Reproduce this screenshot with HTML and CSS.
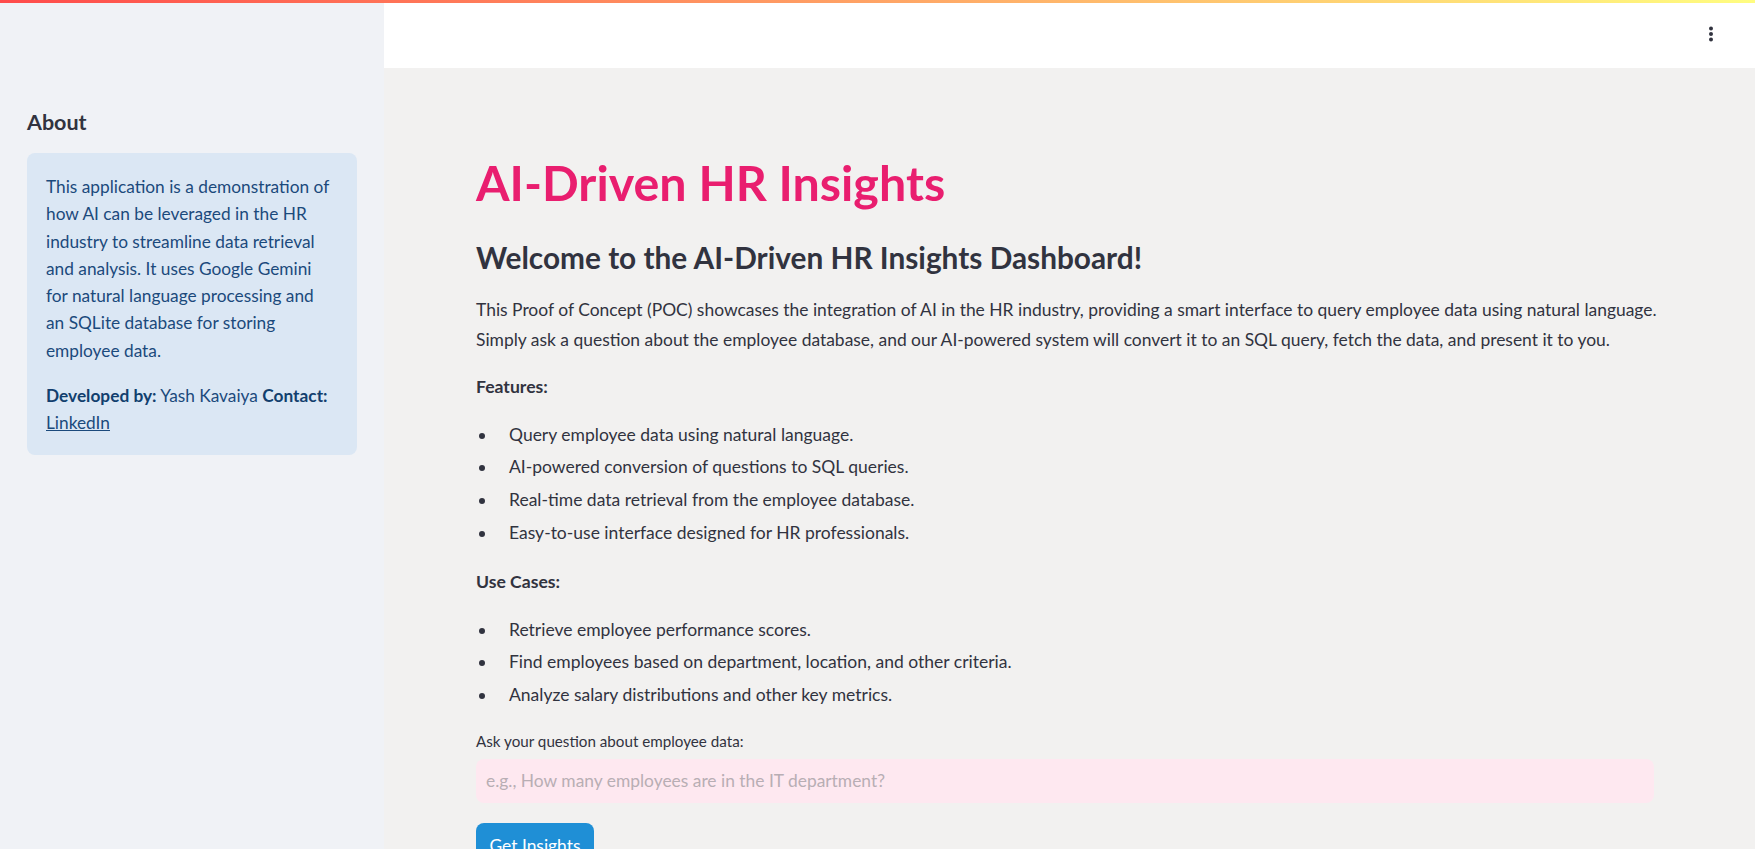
FILE: index.html
```html
<!DOCTYPE html>
<html lang="en">
<head>
<meta charset="utf-8">
<title>AI-Driven HR Insights</title>
<link rel="stylesheet" href="styles.css">
</head>
<body>
<div class="decoration"></div>
<div class="app">
  <aside class="sidebar">
    <h3 class="side-title">About</h3>
    <div class="info">
      <p>This application is a demonstration of<br>how AI can be leveraged in the HR<br>industry to streamline data retrieval<br>and analysis. It uses Google Gemini<br>for natural language processing and<br>an SQLite database for storing<br>employee data.</p>
      <p><strong>Developed by:</strong> Yash Kavaiya <strong>Contact:</strong><br><a href="#" class="link">LinkedIn</a></p>
    </div>
  </aside>
  <main class="main">
    <header class="topbar">
      <button class="menu" type="button" aria-label="Main menu">
        <svg width="16" height="16" viewBox="0 0 16 16"><circle cx="8" cy="2.5" r="2" fill="#31333f"/><circle cx="8" cy="8" r="2" fill="#31333f"/><circle cx="8" cy="13.5" r="2" fill="#31333f"/></svg>
      </button>
    </header>
    <section class="content">
      <h1 class="title">AI-Driven HR Insights</h1>
      <h3 class="subtitle">Welcome to the AI-Driven HR Insights Dashboard!</h3>
      <p class="intro">This Proof of Concept (POC) showcases the integration of AI in the HR industry, providing a smart interface to query employee data using natural language.<br>Simply ask a question about the employee database, and our AI-powered system will convert it to an SQL query, fetch the data, and present it to you.</p>
      <p class="section-label">Features:</p>
      <ul class="bullets">
        <li>Query employee data using natural language.</li>
        <li>AI-powered conversion of questions to SQL queries.</li>
        <li>Real-time data retrieval from the employee database.</li>
        <li>Easy-to-use interface designed for HR professionals.</li>
      </ul>
      <p class="section-label second">Use Cases:</p>
      <ul class="bullets">
        <li>Retrieve employee performance scores.</li>
        <li>Find employees based on department, location, and other criteria.</li>
        <li>Analyze salary distributions and other key metrics.</li>
      </ul>
      <label class="field-label" for="q">Ask your question about employee data:</label>
      <input class="field" id="q" type="text" placeholder="e.g., How many employees are in the IT department?">
      <div class="actions"><button class="primary" type="button">Get Insights</button></div>
    </section>
  </main>
</div>
</body>
</html>
```
FILE: styles.css
```css
* { box-sizing: border-box; }
html, body { margin: 0; padding: 0; height: 100%; }
body {
  font-family: "Lato", "Liberation Sans", sans-serif;
  color: #31333f;
  background: #f2f1f0;
  overflow: hidden;
}
.decoration {
  position: absolute;
  top: 0; left: 0; right: 0;
  height: 3px;
  background: linear-gradient(90deg, #ff4b4b, #fffd80);
  z-index: 10;
}
.app {
  display: flex;
  height: 100vh;
}
.sidebar {
  width: 384px;
  flex: none;
  background: #f0f2f6;
  padding: 107px 27px 0;
}
.side-title {
  margin: 0;
  font-size: 21.5px;
  line-height: 30px;
  font-weight: 700;
  color: #31333f;
}
.info {
  margin-top: 16px;
  background: #dbe7f4;
  border-radius: 8px;
  padding: 20px 19px 18px;
  color: #1b4a7c;
  font-size: 17.3px;
  line-height: 27.3px;
}
.info p { margin: 0; white-space: nowrap; }
.info p + p { margin-top: 18px; }
.info strong { font-weight: 700; color: #123f6e; }
.link { color: #1b4a7c; text-decoration: underline; }

.main {
  flex: 1;
  display: flex;
  flex-direction: column;
  min-width: 0;
}
.topbar {
  height: 68px;
  flex: none;
  background: #ffffff;
  display: flex;
  align-items: center;
  justify-content: flex-end;
  padding-right: 36px;
}
.menu {
  border: 0;
  background: transparent;
  padding: 0;
  width: 16px;
  height: 16px;
  display: flex;
}
.content {
  padding: 84px 91px 0 92px;
  display: flex;
  flex-direction: column;
}
.title {
  margin: 0;
  font-size: 48.4px;
  line-height: 60px;
  font-weight: 700;
  color: #e91e6f;
}
.subtitle {
  margin: 26px 0 0;
  font-size: 29.8px;
  line-height: 40px;
  font-weight: 700;
  color: #31333f;
}
.intro {
  margin: 17px 0 0;
  font-size: 17.45px;
  line-height: 29.5px;
  white-space: nowrap;
}
.section-label {
  margin: 18px 0 0;
  font-size: 17.6px;
  line-height: 29.5px;
  font-weight: 700;
}
.section-label.second { margin-top: 16.8px; }
.bullets {
  list-style: none;
  margin: 18px 0 0;
  padding: 0;
}
.bullets li {
  display: flex;
  font-size: 17.5px;
  line-height: 29.5px;
  margin-bottom: 3.2px;
}
.bullets li::before {
  content: "";
  flex: none;
  width: 6px;
  height: 6px;
  border-radius: 50%;
  background: #31333f;
  margin: 13px 24px 0 3px;
}
.field-label {
  margin-top: 17.3px;
  font-size: 15.2px;
  line-height: 22px;
  color: #31333f;
}
.field {
  margin-top: 7px;
  height: 44px;
  width: calc(100% - 10px);
  border: 0;
  outline: none;
  border-radius: 8px;
  background: #fee8f0;
  padding: 0 10px;
  font-family: inherit;
  font-size: 17.4px;
  color: #31333f;
}
.field::placeholder { color: #b8aeb4; }
.actions { margin-top: 20px; display: flex; }
.primary {
  height: 46px;
  padding: 0 13.5px;
  border: 0;
  border-radius: 8px;
  background: #1f8fd6;
  color: #ffffff;
  font-family: inherit;
  font-size: 17.4px;
}
```
